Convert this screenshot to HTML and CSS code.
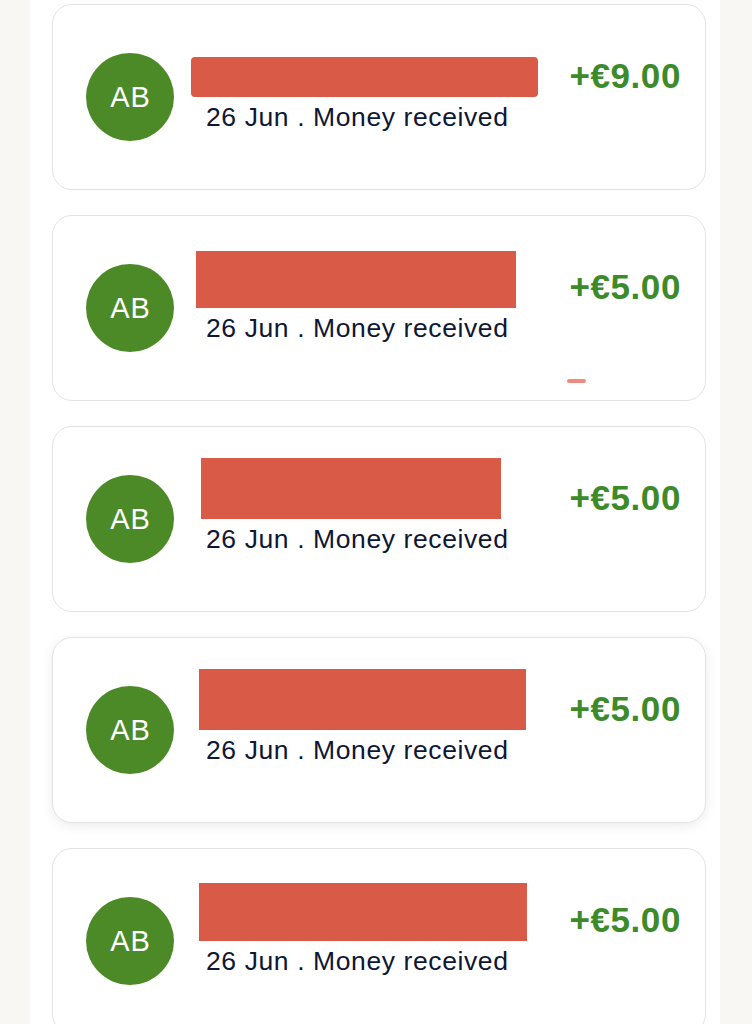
FILE: index.html
```html
<!DOCTYPE html>
<html lang="en">
<head>
    <meta charset="UTF-8">
    <meta name="viewport" content="width=device-width, initial-scale=1.0">
    <title>Transactions</title>
    <link rel="stylesheet" href="styles.css">
</head>
<body>
    <div class="page">
        <div class="tx-list">
            <div class="tx-card">
                <div class="avatar">AB</div>
                <div class="tx-info">
                    <div class="redact-slot">
                        <div class="redact redact-rounded" style="margin-left: 0; width: 347px; height: 40px;"></div>
                    </div>
                    <div class="tx-meta">26 Jun . Money received</div>
                </div>
                <div class="tx-amount">+€9.00</div>
            </div>

            <div class="tx-card">
                <div class="avatar">AB</div>
                <div class="tx-info">
                    <div class="redact-slot">
                        <div class="redact" style="margin-left: 5px; width: 320px; height: 57px;"></div>
                    </div>
                    <div class="tx-meta">26 Jun . Money received</div>
                </div>
                <div class="tx-amount">+€5.00</div>
                <span class="scribble"></span>
            </div>

            <div class="tx-card">
                <div class="avatar">AB</div>
                <div class="tx-info">
                    <div class="redact-slot">
                        <div class="redact" style="margin-left: 10px; width: 300px; height: 61px;"></div>
                    </div>
                    <div class="tx-meta">26 Jun . Money received</div>
                </div>
                <div class="tx-amount">+€5.00</div>
            </div>

            <div class="tx-card tx-card-raised">
                <div class="avatar">AB</div>
                <div class="tx-info">
                    <div class="redact-slot">
                        <div class="redact" style="margin-left: 8px; width: 327px; height: 61px;"></div>
                    </div>
                    <div class="tx-meta">26 Jun . Money received</div>
                </div>
                <div class="tx-amount">+€5.00</div>
            </div>

            <div class="tx-card">
                <div class="avatar">AB</div>
                <div class="tx-info">
                    <div class="redact-slot">
                        <div class="redact" style="margin-left: 8px; width: 328px; height: 58px;"></div>
                    </div>
                    <div class="tx-meta">26 Jun . Money received</div>
                </div>
                <div class="tx-amount">+€5.00</div>
            </div>
        </div>
    </div>
</body>
</html>
```

FILE: styles.css
```css
body {
    margin: 0;
    background-color: #f8f7f3;
    font-family: "Liberation Sans", Arial, sans-serif;
    color: #0e1733;
}
.page {
    margin: 0 32px 0 30px;
    background-color: #fff;
    min-height: 1024px;
}
.tx-list {
    display: flex;
    flex-direction: column;
    gap: 25px;
    padding: 4px 14px 0 22px;
}
.tx-card {
    position: relative;
    display: flex;
    height: 184px;
    border: 1px solid #e3e3e3;
    border-radius: 20px;
    background-color: #fff;
}
.tx-card-raised {
    box-shadow: 0 3px 12px rgba(0, 0, 0, 0.08);
}
.avatar {
    align-self: center;
    flex: none;
    box-sizing: border-box;
    width: 88px;
    height: 88px;
    margin-left: 33px;
    padding-left: 1px;
    border-radius: 50%;
    background-color: #4b8a26;
    color: #fff;
    font-size: 29px;
    letter-spacing: 1px;
    display: flex;
    align-items: center;
    justify-content: center;
}
.tx-info {
    flex: 1;
    margin-left: 17px;
}
.redact-slot {
    height: 92px;
    display: flex;
    align-items: flex-end;
}
.redact {
    background-color: #d85a47;
}
.redact-rounded {
    border-radius: 4px;
}
.tx-meta {
    margin: 5px 0 0 15px;
    font-size: 26.5px;
    line-height: 30px;
    letter-spacing: 0.6px;
    white-space: nowrap;
}
.tx-amount {
    flex: none;
    margin: 53px 24px 0 0;
    font-size: 35px;
    line-height: 36px;
    font-weight: bold;
    letter-spacing: 0.6px;
    color: #3c8a2a;
}
.scribble {
    position: absolute;
    left: 514px;
    top: 163px;
    width: 19px;
    height: 4px;
    border-radius: 2px;
    background-color: #ef8b7c;
}
```
